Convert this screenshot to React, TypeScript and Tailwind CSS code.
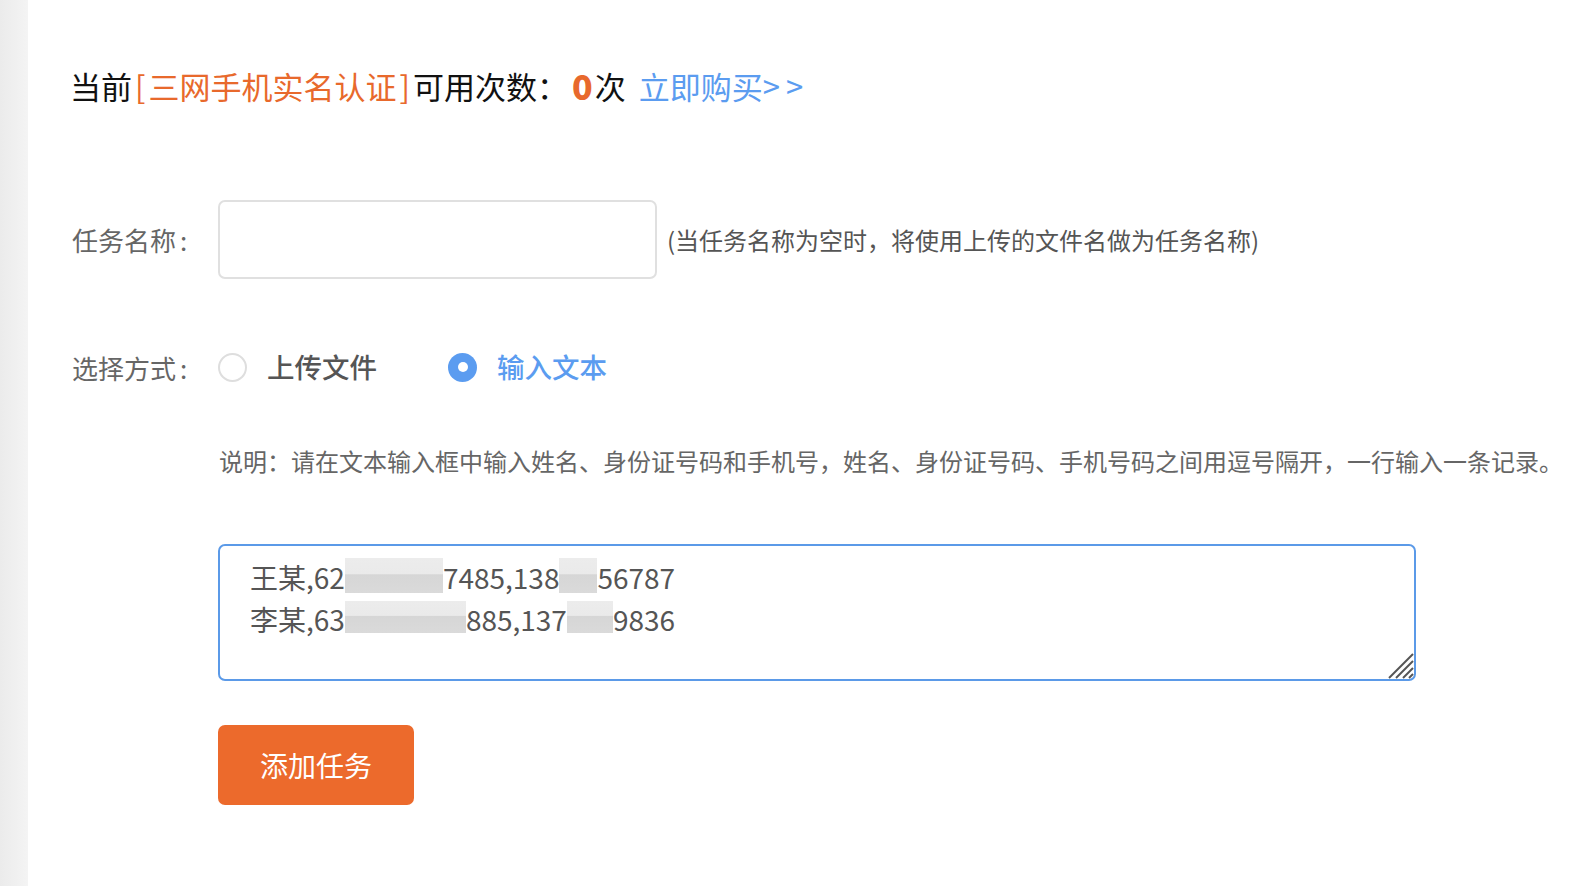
import React from "react";

const font = { fontFamily: '"Noto Sans CJK SC", "Noto Sans", sans-serif' };

function Blur({ w, tall }: { w: number; tall?: boolean }) {
    // pixelated mosaic over part of the number
    return (
        <span
            className="inline-block align-middle bg-[linear-gradient(180deg,#ececec_0%,#eaeaea_45%,#d6d6d6_48%,#dadada_100%)]"
            style={{ width: w, height: tall ? 32 : 35, marginTop: -4 }}
        />
    );
}

function Radio({ checked }: { checked?: boolean }) {
    if (checked) {
        return (
            <span className="w-[29px] h-[29px] rounded-full bg-[#5b9cf0] flex items-center justify-center">
                <span className="w-[10px] h-[10px] rounded-full bg-white" />
            </span>
        );
    }
    return <span className="w-[29px] h-[29px] rounded-full border-2 border-[#dedede] bg-white" />;
}

export default function App() {
    return (
        <div className="flex min-h-screen bg-white" style={font}>
            <div className="w-[28px] shrink-0 bg-[linear-gradient(90deg,#ebebeb,#f4f4f4)]" />
            <div className="flex-1 pl-[42px] pt-[66px]">
                <div className="flex items-center text-[31px] leading-[40px] text-[#111] whitespace-nowrap">
                    <span>当前</span>
                    <span className="text-[#e8692c]">
                        <span className="px-[3px]">[</span>三网手机实名认证<span className="px-[3px]">]</span>
                    </span>
                    <span>可用次数：</span>
                    <span className="text-[#e8692c] text-[34px] font-black ml-[4px]">0</span>
                    <span className="ml-[2px]">次</span>
                    <span className="text-[#5b9cf0] ml-[13px]">
                        立即购买<span className="tracking-[6px]">&gt;&gt;</span>
                    </span>
                </div>

                <div className="flex items-center mt-[94px] ml-[2px]">
                    <label className="w-[146px] text-[26px] text-[#666]">
                        任务名称<span className="ml-[4px]">:</span>
                    </label>
                    <input className="w-[439px] h-[79px] border-2 border-[#e0e0e0] rounded-[7px] outline-none px-3 text-[24px]" />
                    <span className="ml-[10px] text-[24px] text-[#555] whitespace-nowrap">(当任务名称为空时，将使用上传的文件名做为任务名称)</span>
                </div>

                <div className="flex items-center h-[40px] mt-[68px] ml-[2px]">
                    <label className="w-[146px] text-[26px] text-[#666]">
                        选择方式<span className="ml-[4px]">:</span>
                    </label>
                    <div className="flex items-center gap-[20px]">
                        <Radio />
                        <span className="text-[27.5px] text-[#555] font-medium">上传文件</span>
                    </div>
                    <div className="flex items-center gap-[20px] ml-[71px]">
                        <Radio checked />
                        <span className="text-[27.5px] text-[#5b9cf0] font-medium">输入文本</span>
                    </div>
                </div>

                <p className="mt-[58px] ml-[149px] text-[24px] leading-[32px] text-[#666] whitespace-nowrap">
                    说明：请在文本输入框中输入姓名、身份证号码和手机号，姓名、身份证号码、手机号码之间用逗号隔开，一行输入一条记录。
                </p>

                <div className="relative mt-[67px] ml-[148px] w-[1198px] h-[137px] border-2 border-[#5b9ae8] rounded-[7px] pl-[30px] pt-[10px] text-[28px] leading-[42px] text-[#555] whitespace-nowrap">
                    <div className="flex items-center">
                        <span>王某,62</span>
                        <Blur w={98} />
                        <span>7485,138</span>
                        <Blur w={38} />
                        <span>56787</span>
                    </div>
                    <div className="flex items-center">
                        <span>李某,63</span>
                        <Blur w={121} tall />
                        <span>885,137</span>
                        <Blur w={46} tall />
                        <span>9836</span>
                    </div>
                    <svg className="absolute right-0 bottom-0" width="28" height="28" viewBox="0 0 28 28">
                        <g stroke="#555" strokeWidth="2">
                            <line x1="27" y1="3" x2="3" y2="27" />
                            <line x1="27" y1="10" x2="10" y2="27" />
                            <line x1="27" y1="17" x2="17" y2="27" />
                            <line x1="27" y1="23" x2="23" y2="27" />
                        </g>
                    </svg>
                </div>

                <button className="mt-[44px] ml-[148px] w-[196px] h-[80px] rounded-[7px] bg-[#ec6a2c] text-white text-[28px] flex items-center justify-center">
                    添加任务
                </button>
            </div>
        </div>
    );
}
